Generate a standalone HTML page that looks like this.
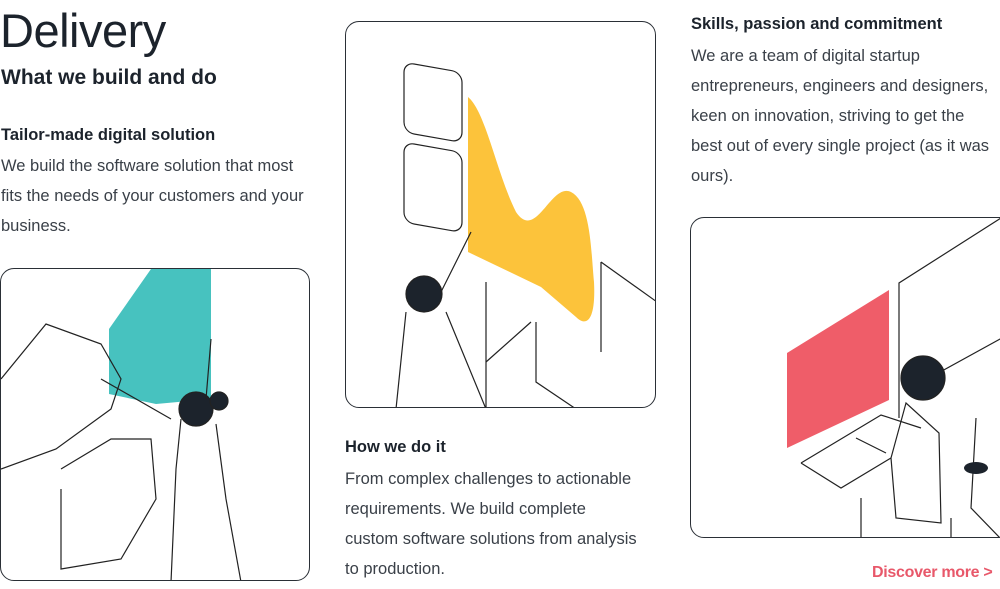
<!DOCTYPE html>
<html><head><meta charset="utf-8"><style>
*{margin:0;padding:0;box-sizing:border-box}
body{width:1000px;height:589px;overflow:hidden;background:#fff;font-family:"Liberation Sans",sans-serif;color:#1c232c;position:relative}
.a{position:absolute}
h1{font-weight:300;font-size:47px;letter-spacing:-0.5px}
h2{font-size:21px;font-weight:bold}
h3{font-size:16.5px;font-weight:bold}
p{font-size:16.5px;line-height:30px;color:#3a4048;font-weight:300}
.card{position:absolute;border:1.3px solid #2a2f36;border-radius:14px;overflow:hidden;background:#fff}
</style></head><body>
<h1 class="a" style="left:0;top:3px">Delivery</h1>
<h2 class="a" style="left:1px;top:66px">What we build and do</h2>
<h3 class="a" style="left:1px;top:126px">Tailor-made digital solution</h3>
<p class="a" style="left:1px;top:151px;width:305px">We build the software solution that most fits the needs of your customers and your business.</p>

<div class="card" style="left:0;top:268px;width:310px;height:313px">
<svg width="310" height="313" fill="none" stroke="#222" stroke-width="1.2">
<polygon points="150,0 210,0 210,130 155,135 108,125 108,60" fill="#47c2bf" stroke="none"/>
<polyline points="0,110 45,55 100,75 120,110 110,140 55,180 0,200"/>
<polyline points="60,200 110,170 150,170 155,230 120,290 60,300 60,220"/>
<circle cx="195" cy="140" r="17" fill="#1c232c"/>
<circle cx="218" cy="132" r="9" fill="#1c232c"/>
<path d="M180 150 L175 200 L170 313 M215 155 L225 230 L240 313 M210 70 L205 130 M100 110 L170 150"/>
</svg></div>

<div class="card" style="left:345px;top:21px;width:311px;height:387px">
<svg width="311" height="387" fill="none" stroke="#222" stroke-width="1.2">
<path d="M122 75 C140 90 150 150 170 190 C190 220 205 160 225 170 C245 180 245 230 248 260 C250 300 240 305 230 295 L195 265 L122 230 Z" fill="#fcc33b" stroke="none"/>
<rect x="58" y="40" width="58" height="70" rx="10" transform="skewY(10) translate(0,-10)"/>
<rect x="58" y="120" width="58" height="80" rx="10" transform="skewY(10) translate(0,-10)"/>
<path d="M255 240 L311 280 M255 240 L255 330 M190 300 L190 360 L230 387 M140 260 L140 387"/>
<circle cx="78" cy="272" r="18" fill="#1c232c"/>
<path d="M60 290 L50 387 M100 290 L140 387 M95 270 L125 210 M140 340 L185 300"/>
</svg></div>
<h3 class="a" style="left:345px;top:438px">How we do it</h3>
<p class="a" style="left:345px;top:464px;white-space:nowrap">From complex challenges to actionable<br>requirements. We build complete<br>custom software solutions from analysis<br>to production.</p>

<h3 class="a" style="left:691px;top:15px">Skills, passion and commitment</h3>
<p class="a" style="left:691px;top:41px;width:309px">We are a team of digital startup entrepreneurs, engineers and designers, keen on innovation, striving to get the best out of every single project (as it was ours).</p>

<div class="card" style="left:690px;top:217px;width:330px;height:321px">
<svg width="330" height="321" fill="none" stroke="#222" stroke-width="1.2">
<polygon points="96,135 198,72 198,182 96,230" fill="#ef5d69" stroke="none"/>
<path d="M310 0 L208 65 L208 200 M320 115 L220 170 M110,245 L190,197 L230,210 M110,245 L150,270 L200,240"/>
<circle cx="232" cy="160" r="22" fill="#1c232c"/>
<path d="M215 185 L200 240 L205 300 L250 305 L248 215 Z"/>
<path d="M165 220 L195 235 M170 280 L170 321 M260 300 L260 321 M285 200 L280 290 L310 321"/>
<ellipse cx="285" cy="250" rx="12" ry="6" fill="#1c232c" stroke="none"/>
</svg></div>
<div class="a" style="left:872px;top:564px;font-size:16px;font-weight:bold;color:#e8586a;white-space:nowrap;letter-spacing:-0.3px">Discover more &gt;</div>
</body></html>
